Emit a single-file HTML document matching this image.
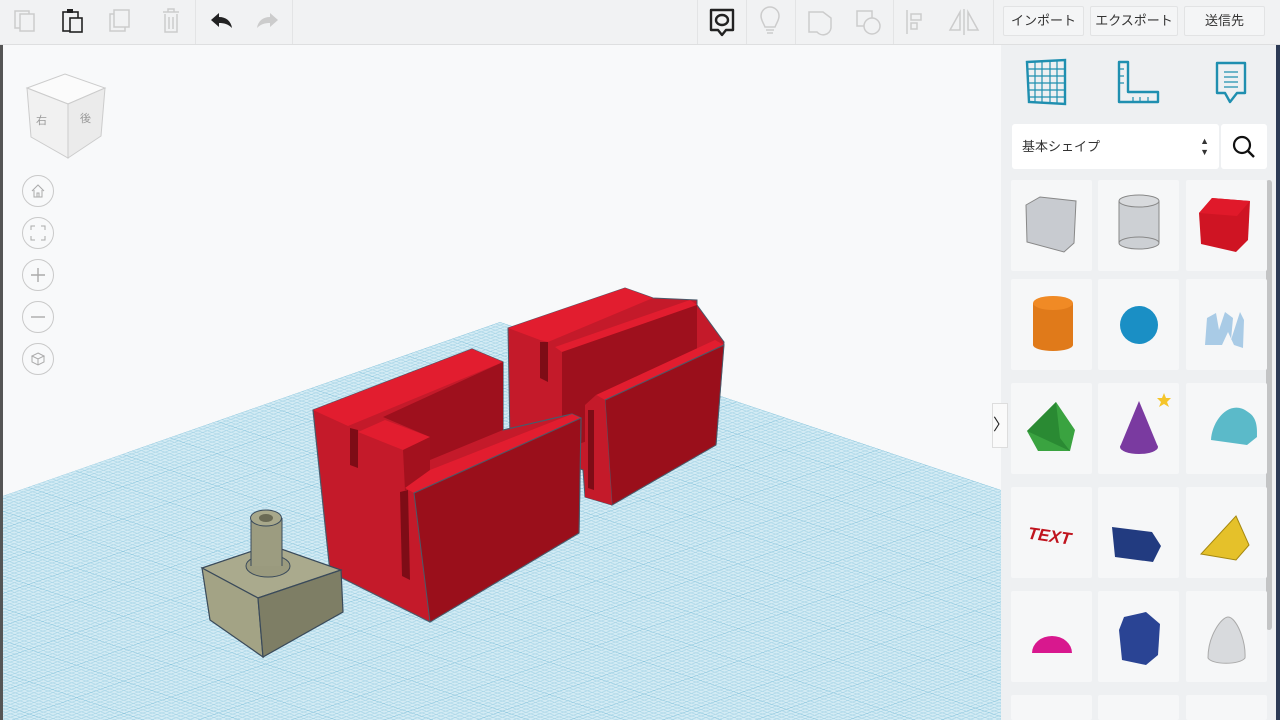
<!DOCTYPE html>
<html><head><meta charset="utf-8"><style>
*{margin:0;padding:0;box-sizing:border-box}
html,body{width:1280px;height:720px;overflow:hidden}
body{background:#f8f9fa;font-family:"Liberation Sans","Noto Sans CJK JP",sans-serif;position:relative}
.tb{position:absolute;left:0;top:0;width:1280px;height:45px;background:#f1f2f3;border-bottom:1px solid #dedfe0}
.btn{position:absolute;top:6px;height:30px;background:#f4f5f6;border:1px solid #e2e3e4;border-radius:2px;font-size:13px;color:#333;text-align:center;line-height:28px}
.sep{position:absolute;top:0;width:1px;height:44px;background:#e3e4e5}
.panel{position:absolute;left:1001px;top:45px;width:279px;height:675px;background:#eef0f2}
.tile{position:absolute;width:81px;height:91px;background:#f6f7f8;border-radius:2px}
.nav{position:absolute;left:22px;width:32px;height:32px;border:1px solid #c9c9c9;border-radius:50%;background:#f8f9fa}
</style></head><body>
<svg width="1280" height="720" style="position:absolute;left:0;top:0">
<defs>
<pattern id="g" width="100" height="100" patternUnits="userSpaceOnUse" patternTransform="matrix(0.474 0.159 -0.472 0.165 500 322)">
<rect width="100" height="100" fill="#d3ebf4"/>
<path d="M10 0V100M20 0V100M30 0V100M40 0V100M50 0V100M60 0V100M70 0V100M80 0V100M90 0V100M0 10H100M0 20H100M0 30H100M0 40H100M0 50H100M0 60H100M0 70H100M0 80H100M0 90H100" stroke="#a6d4e6" stroke-width="1.8"/>
<path d="M0 0V100M0 0H100" stroke="#7fbfd9" stroke-width="3"/>
</pattern>
</defs>
<polygon points="500,322 1001,490 1001,720 0,720 0,497" fill="url(#g)"/>
<!-- object B -->
<polygon points="508,328 625,288 653,298 697,300 697,305 724,342 716,445 612,505 585,497 583,470 510,440" fill="#c41a2a" stroke="#4a5a6a" stroke-width="1"/>
<polygon points="508,328 625,288 653,298 548,342 540,340" fill="#e21d2f"/>
<polygon points="540,342 548,342 548,382 540,378" fill="#7e0c16"/>
<polygon points="555,347 690,300 697,305 562,352" fill="#e21d2f"/>
<polygon points="562,352 697,305 697,372 596,398 590,440 562,450" fill="#9e101d"/>
<polygon points="596,395 715,340 724,345 605,400" fill="#e21d2f"/>
<polygon points="605,400 724,345 716,445 612,505" fill="#9a0f1b" stroke="#4a5a6a" stroke-width="1"/>
<polygon points="585,405 596,395 605,400 612,505 585,497" fill="#c41a2a"/>
<polygon points="588,410 594,410 594,490 588,488" fill="#7e0c16"/>
<!-- object A -->
<polygon points="313,410 472,349 503,362 503,430 572,414 581,418 579,533 430,622 330,572" fill="#c41a2a" stroke="#4a5a6a" stroke-width="1.2"/>
<polygon points="313,410 472,349 503,362 348,426" fill="#e21d2f"/>
<polygon points="383,417 503,362 503,430 430,460 430,437" fill="#9e101d"/>
<polygon points="350,428 358,430 358,468 350,465" fill="#7e0c16"/>
<polygon points="358,432 385,420 430,437 403,450" fill="#e21d2f"/>
<polygon points="403,450 430,437 430,480 405,490" fill="#a3111e"/>
<polygon points="430,470 572,414 581,418 414,493 405,488" fill="#e21d2f"/>
<polygon points="414,493 581,418 579,533 430,622" fill="#9a0f1b" stroke="#4a5a6a" stroke-width="1"/>
<polygon points="400,492 408,490 410,580 402,576" fill="#7e0c16"/>
<!-- gray object -->
<polygon points="202,568 270,545 341,570 258,598" fill="#aaaa8d" stroke="#3a4a5a" stroke-width="1.2"/>
<polygon points="202,568 258,598 263,657 210,620" fill="#a3a385" stroke="#3a4a5a" stroke-width="1.2"/>
<polygon points="258,598 341,570 343,612 263,657" fill="#7e7e65" stroke="#3a4a5a" stroke-width="1.2"/>
<ellipse cx="268" cy="566" rx="22" ry="11" fill="#9a9a7e" stroke="#3a4a5a"/>
<rect x="251" y="518" width="31" height="48" fill="#9c9c80"/>
<path d="M251 518V566M282 518V566" stroke="#3a4a5a"/>
<ellipse cx="266" cy="518" rx="15.5" ry="8" fill="#a8a88b" stroke="#3a4a5a"/>
<ellipse cx="266" cy="518" rx="7" ry="4" fill="#6a6a55"/>
<!-- view cube -->
<polygon points="27,88 65,74 105,88 68,104" fill="#fbfbfb" stroke="#ccc"/>
<polygon points="27,88 68,104 68,158 31,137" fill="#f1f1f1" stroke="#ccc"/>
<polygon points="68,104 105,88 101,136 68,158" fill="#ebebeb" stroke="#ccc"/>
<text x="36" y="124" font-size="11" fill="#999" font-family="Noto Sans CJK JP">右</text>
<text x="80" y="122" font-size="11" fill="#999" font-family="Noto Sans CJK JP">後</text>
<rect x="0" y="0" width="3" height="720" fill="#555"/>
<rect x="0" y="0" width="3" height="40" fill="#2a9fb0"/>
</svg>
<div class="nav" style="top:175px"><svg width="30" height="30"><path d="M9 15L15 9L21 15M11 14V21H19V14M14 21V17H16V21" fill="none" stroke="#aaa"/></svg></div>
<div class="nav" style="top:217px"><svg width="30" height="30"><path d="M8 12V8H12M18 8H22V12M22 18V22H18M12 22H8V18" fill="none" stroke="#aaa"/></svg></div>
<div class="nav" style="top:259px"><svg width="30" height="30"><path d="M15 8V22M8 15H22" stroke="#aaa" stroke-width="1.4"/></svg></div>
<div class="nav" style="top:301px"><svg width="30" height="30"><path d="M8 15H22" stroke="#aaa" stroke-width="1.4"/></svg></div>
<div class="nav" style="top:343px"><svg width="30" height="30"><path d="M15 9L21 12L15 15L9 12ZM9 12V18L15 21L21 18V12M15 15V21" fill="none" stroke="#aaa"/></svg></div>

<div class="tb">
<svg width="700" height="44" style="position:absolute;left:0;top:0">
<rect x="15" y="11" width="14" height="17" fill="none" stroke="#ccc" stroke-width="1.5"/><rect x="20" y="14" width="14" height="17" fill="#f1f2f3" stroke="#ccc" stroke-width="1.5"/>
<rect x="63" y="12" width="15" height="19" fill="none" stroke="#222" stroke-width="1.6"/><rect x="67" y="9" width="6" height="4" fill="#222"/><rect x="70" y="18" width="12" height="14" fill="#f1f2f3" stroke="#222" stroke-width="1.6"/>
<rect x="110" y="14" width="15" height="17" fill="none" stroke="#ccc" stroke-width="1.5"/><rect x="114" y="10" width="15" height="17" fill="#f1f2f3" stroke="#ccc" stroke-width="1.5"/>
<path d="M163 12H179M168 12V9H174V12M165 14V32H177V14M169 17V29M173 17V29" fill="none" stroke="#ccc" stroke-width="1.5"/>
<path d="M211 20L219 13V17C226 17 231 21 232 28C228 24 224 23 219 23V27Z" fill="#222"/>
<path d="M278 20L270 13V17C263 17 258 21 257 28C261 24 265 23 270 23V27Z" fill="#ccc"/>
</svg>
<div class="sep" style="left:195px"></div><div class="sep" style="left:292px"></div>
<div class="sep" style="left:697px"></div><div class="sep" style="left:746px"></div><div class="sep" style="left:795px"></div><div class="sep" style="left:893px"></div><div class="sep" style="left:993px"></div>
<svg width="300" height="44" style="position:absolute;left:697px;top:0">
<path d="M14 10H36V30H29L25 35L21 30H14Z" fill="none" stroke="#222" stroke-width="2.4" stroke-linejoin="round"/><ellipse cx="25" cy="20" rx="6" ry="5" fill="none" stroke="#222" stroke-width="2.4"/>
<path d="M68 27C66 22 64 20 64 16A9 9 0 0 1 82 16C82 20 80 22 78 27ZM69 30H77M70 33H76" fill="none" stroke="#ccc" stroke-width="1.5"/>
<path d="M112 12H126L134 18V28A8 8 0 0 1 120 32H112Z" fill="none" stroke="#ccc" stroke-width="1.5"/>
<rect x="160" y="11" width="15" height="15" fill="none" stroke="#ccc" stroke-width="1.5"/><circle cx="175" cy="26" r="8" fill="#f1f2f3" stroke="#ccc" stroke-width="1.5"/>
<path d="M210 10V34M214 14H224V20H214ZM214 23H220V29H214Z" fill="none" stroke="#ccc" stroke-width="1.5"/>
<path d="M267 9V35M263 12L253 30H263ZM271 12L281 30H271Z" fill="none" stroke="#ccc" stroke-width="1.5"/>
</svg>
<div class="btn" style="left:1003px;width:81px">インポート</div>
<div class="btn" style="left:1090px;width:88px">エクスポート</div>
<div class="btn" style="left:1184px;width:81px">送信先</div>
</div>

<div class="panel">
<svg width="279" height="75" style="position:absolute;left:0;top:0">
<path d="M26 17L64 15V59L28 57Z" fill="none" stroke="#1f8fb0" stroke-width="2.4"/>
<path d="M34 16V58M41 16V58M49 16V58M56 15V58M27 24H64M27 31H64M27 38H64M28 45H64M28 52H64" stroke="#1f8fb0" stroke-width="1.2"/>
<path d="M118 17H127V47H157V57H118Z" fill="none" stroke="#1f8fb0" stroke-width="2.4" stroke-linejoin="round"/>
<path d="M118 24H123M118 31H123M118 38H123M132 52V57M139 52V57M147 52V57" stroke="#1f8fb0" stroke-width="1.2"/>
<path d="M216 18H244V48H236L229 57L224 48H216Z" fill="none" stroke="#1f8fb0" stroke-width="2.4" stroke-linejoin="round"/>
<path d="M223 27H237M223 32H237M223 37H237M223 42H237" stroke="#1f8fb0" stroke-width="1.3"/>
</svg>
<div style="position:absolute;left:11px;top:79px;width:207px;height:45px;background:#fff;border-radius:3px;font-size:13px;line-height:45px;padding-left:10px;color:#333">基本シェイプ<span style="position:absolute;right:10px;top:0;font-size:9px;line-height:11px;padding-top:12px">▲<br>▼</span></div>
<div style="position:absolute;left:220px;top:79px;width:46px;height:45px;background:#fff;border-radius:3px"><svg width="46" height="45"><circle cx="21" cy="21" r="8" fill="none" stroke="#111" stroke-width="2.2"/><path d="M27 27L33 33" stroke="#111" stroke-width="2.4"/></svg></div>
<div style="position:absolute;left:265px;top:135px;width:6px;height:450px;background:#c3c4c5;border-radius:3px"></div>
<div style="position:absolute;left:275px;top:0;width:4px;height:675px;background:#2c3a55"></div>
</div>
<div class="tile" style="left:1011px;top:180px"></div><div class="tile" style="left:1098px;top:180px"></div><div class="tile" style="left:1186px;top:180px"></div>
<div class="tile" style="left:1011px;top:279px"></div><div class="tile" style="left:1098px;top:279px"></div><div class="tile" style="left:1186px;top:279px"></div>
<div class="tile" style="left:1011px;top:383px"></div><div class="tile" style="left:1098px;top:383px"></div><div class="tile" style="left:1186px;top:383px"></div>
<div class="tile" style="left:1011px;top:487px"></div><div class="tile" style="left:1098px;top:487px"></div><div class="tile" style="left:1186px;top:487px"></div>
<div class="tile" style="left:1011px;top:591px"></div><div class="tile" style="left:1098px;top:591px"></div><div class="tile" style="left:1186px;top:591px"></div>
<div class="tile" style="left:1011px;top:695px;height:25px"></div><div class="tile" style="left:1098px;top:695px;height:25px"></div><div class="tile" style="left:1186px;top:695px;height:25px"></div>
<svg width="280" height="720" style="position:absolute;left:1000px;top:0">
<polygon points="26,205 40,197 76,201 74,243 64,252 27,242" fill="#c8cbd0" stroke="#888"/>
<rect x="119" y="201" width="40" height="42" fill="#cdd0d4" stroke="#888"/><ellipse cx="139" cy="201" rx="20" ry="6" fill="#d8dadd" stroke="#888"/><ellipse cx="139" cy="243" rx="20" ry="6" fill="#cdd0d4" stroke="#888"/>
<polygon points="199,213 212,198 250,201 248,240 236,252 201,244" fill="#cf1423"/><polygon points="199,213 212,198 250,201 237,216" fill="#e0192a"/>
<rect x="33" y="303" width="40" height="42" fill="#e07a1a"/><ellipse cx="53" cy="303" rx="20" ry="7" fill="#f08a25"/><ellipse cx="53" cy="345" rx="20" ry="6" fill="#e07a1a"/>
<circle cx="139" cy="325" r="19" fill="#1a8fc5"/>
<path d="M205 345L207 318L216 313L219 330L225 312L233 318L231 340L240 312L244 320L243 348L234 345L228 332L222 345Z" fill="#a9cbe6"/>
<polygon points="27,431 56,402 75,430 70,451 38,451" fill="#3aa340"/><polygon points="27,431 56,402 60,438 70,451" fill="#2a8a33"/>
<polygon points="139,401 158,447 120,447" fill="#7a3aa0"/><ellipse cx="139" cy="447" rx="19" ry="7" fill="#7a3aa0"/>
<polygon points="164,393 166,398 171,398 167,402 169,407 164,404 159,407 161,402 157,398 162,398" fill="#f5c52a"/>
<path d="M211 440C212 420 230 398 248 412C258 418 257 430 257 437L247 445Z" fill="#5bbac9"/>
<text x="28" y="542" font-size="17" font-weight="bold" fill="#c0141e" font-style="italic" transform="rotate(8 52 535)">TEXT</text>
<polygon points="112,527 152,532 161,546 153,562 115,557" fill="#223b80"/>
<polygon points="236,516 249,545 236,560 201,554" fill="#e5c12a" stroke="#a58810"/>
<path d="M32 653A20 17 0 0 1 72 653Z" fill="#d8188e"/>
<polygon points="124,617 146,612 160,624 158,655 146,665 122,660 119,630" fill="#2a4494"/>
<path d="M208 658C208 635 222 617 228 617C236 617 246 640 245 658C240 665 212 665 208 658Z" fill="#d8dadd" stroke="#aaa"/>
</svg>
<div style="position:absolute;left:992px;top:403px;width:16px;height:45px;background:#fafafa;border:1px solid #ddd;font-size:16px;line-height:43px;text-align:center;color:#222">〉</div>
</body></html>
